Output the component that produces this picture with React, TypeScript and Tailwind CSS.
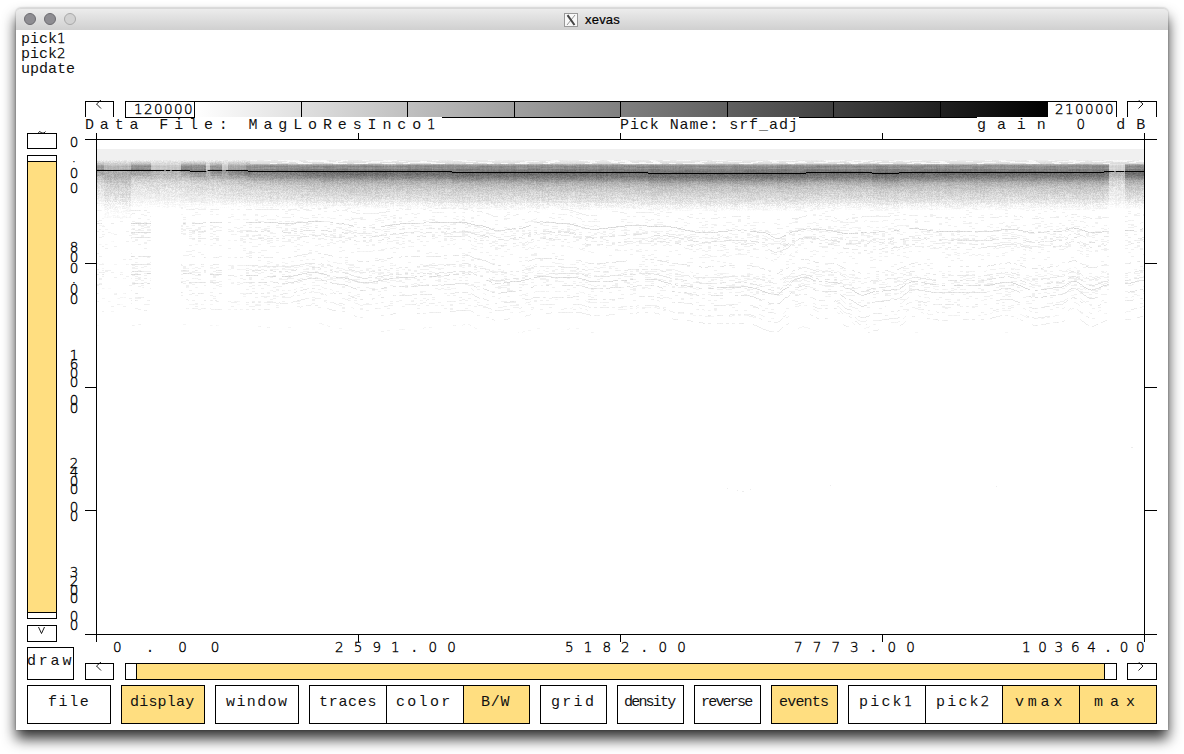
import React from "react";

const LETTER_ADVANCE = 9;
const DIGIT_ADVANCE = 8.59;

const letterFont = 'font-["Liberation_Mono",monospace] text-[15px]';
const digitFont = 'font-["DejaVu_Sans",sans-serif] font-extralight text-[13.5px] text-black [-webkit-text-stroke:0.35px_black]';

/* Fixed pitch label: every character takes `pitch` pixels. */
function Label({ text, pitch, className = "" }: { text: string; pitch: number; className?: string }) {
  const runs = text.match(/\d+|[^\d]+/g) ?? [];
  return (
    <div className={`${letterFont} whitespace-pre text-[#111] ${className}`}>
      {runs.map((run, i) =>
        /\d/.test(run) ? (
          <span key={i} className={`${digitFont} leading-[0]`} style={{ letterSpacing: pitch - DIGIT_ADVANCE }}>
            {run}
          </span>
        ) : (
          <span key={i} style={{ letterSpacing: pitch - LETTER_ADVANCE }}>
            {run}
          </span>
        )
      )}
    </div>
  );
}

type Pt = [number, number];

const upper: Pt[] = [
  [97, 222], [250, 222.5], [290, 223], [320, 221], [340, 223], [363, 226.7], [410, 221.7], [430, 221], [463, 220.7],
  [480, 224], [497, 229], [520, 227], [540, 221], [563, 222.7], [593, 229], [630, 225.7], [663, 226], [703, 232],
  [740, 229], [763, 230.7], [777, 236.7], [785, 234], [792, 230], [807, 227], [823, 228], [847, 231.7], [877, 230.7],
  [913, 228], [940, 231], [990, 231], [1010, 229], [1033, 232], [1060, 230.5], [1073, 227], [1093, 231.5],
  [1107, 230], [1125, 229], [1145, 227],
];
const lower: Pt[] = [
  [97, 275], [182, 274], [250, 275], [285, 275.5], [313, 271], [340, 276], [363, 281.6], [400, 277], [430, 276],
  [467, 274], [480, 279], [497, 284], [515, 282], [540, 277], [575, 277.5], [593, 281], [650, 278], [680, 284],
  [703, 287], [745, 286], [777, 294], [786, 288], [795, 279], [803, 277], [820, 282], [835, 282.5], [847, 289],
  [862, 295.5], [875, 292], [895, 290], [913, 281.5], [940, 285], [980, 285], [1007, 281], [1035, 289], [1060, 286],
  [1073, 280], [1091, 289], [1108, 284], [1125, 283], [1145, 280],
];

function sample(points: Pt[], x: number) {
  for (let i = 1; i < points.length; i++) {
    if (x <= points[i][0]) {
      const [x0, y0] = points[i - 1];
      const [x1, y1] = points[i];
      const t = (x - x0) / (x1 - x0);
      return y0 + (y1 - y0) * t * t * (3 - 2 * t);
    }
  }
  return points[points.length - 1][1];
}

function hash(a: number, b: number) {
  let h = (Math.imul(a, 374761393) + Math.imul(b, 668265263)) | 0;
  h = Math.imul(h ^ (h >>> 13), 1274126177);
  return ((h ^ (h >>> 16)) >>> 0) / 4294967296;
}

/* Coverage of each trace: [from, to, surface strength, reflector strength] */
const zones = [
  [97, 103, 0.95, 0.7], [104, 130, 0.62, 0.25], [131, 150, 1.05, 1.1], [151, 180, 0.45, 0], [181, 205, 1.05, 0.9],
  [206, 209, 0.4, 0], [210, 221, 0.95, 0.9], [222, 227, 0.4, 0], [228, 245, 0.8, 0.6], [246, 1108, 1, 1],
  [1109, 1124, 0.3, 0], [1125, 1143, 1, 1],
];

/* Reflectors: [depth on the left edge, darkness, chance of ink] */
const events = [
  [209, 20, 0.5], [214, 16, 0.3], [218, 14, 0.25], [222.5, 38, 0.85], [226, 14, 0.3], [229, 22, 0.4], [231.5, 30, 0.6],
  [234, 20, 0.4], [237, 26, 0.5], [240, 16, 0.3], [245, 14, 0.25], [256, 26, 0.55], [262, 13, 0.25], [265, 24, 0.6],
  [268, 14, 0.25], [271, 28, 0.6], [275, 36, 0.8], [278, 16, 0.25], [283, 30, 0.65], [289, 14, 0.3], [293, 24, 0.5],
  [297, 16, 0.35], [301.5, 20, 0.45], [304, 14, 0.3], [310, 20, 0.5], [326, 12, 0.25],
];

const surface = (x: number) =>
  x < 190 ? 170 : x < 207 ? 171 : x < 248 ? 170 : x < 452 ? 171 : x < 648 ? 172 : x < 806 ? 173 : x < 872 ? 172 : x < 899 ? 173 : x < 1104 ? 172 : 171;

const ramp = (stops: Pt[], v: number) => {
  if (v <= stops[0][0]) return stops[0][1];
  for (let i = 1; i < stops.length; i++)
    if (v <= stops[i][0])
      return stops[i - 1][1] + ((stops[i][1] - stops[i - 1][1]) * (v - stops[i - 1][0])) / (stops[i][0] - stops[i - 1][0]);
  return stops[stops.length - 1][1];
};

const coda: Pt[] = [[1, 148], [4, 135], [7, 112], [10, 82], [14, 62], [20, 44], [26, 33], [31, 20], [35, 8], [39, 0]];

function buildSection() {
  const ink: Float32Array[] = [];
  const top = 149;
  const rows = 184;
  for (let r = 0; r < rows; r++) ink.push(new Float32Array(1047));
  for (let x = 97; x <= 1143; x++) {
    const zone = zones.find((z) => x >= z[0] && x <= z[1]) ?? zones[9];
    const s = surface(x);
    const col = hash(x, 7) - 0.5;
    const left = ramp([[97, 0.55], [180, 0.55], [250, 0.8], [330, 1]], x);
    for (let y = top; y < 218; y++) {
      const n = hash(x, y) - 0.5;
      let v = 0;
      if (y < 160) v = 16 + col * 2;
      else if (y < 164) {
        v = 20 + (y - 160) * 5 + n * 6;
        const dash = hash(Math.floor((x + y * 5) / 7), y);
        if (dash > 0.62) v = 8 + n * 6;
        if (x < 250) v = 18 + (y - 160) * 14 * zone[2] + n * 20;
      } else if (y < s) {
        const band = ramp([[164, 78], [165, 105], [166, 118], [168, 112], [169, 128], [170, 130], [172, 138]], y);
        v = (band + n * 12 + (hash(Math.floor(x / 12), y) - 0.5) * 14) * (zone[2] * 0.9 + 0.1) * (0.85 + left * 0.15) + col * 10;
      } else if (y === s) {
        const broken = zone[2] < 0.5 && hash(x >> 1, 3) > 0.8;
        v = broken ? 130 : 255;
      } else {
        const d = y - s;
        const streak = (hash(Math.floor((x + y * 13) / 9), y) - 0.5) * 10;
        const base = ramp(coda, d);
        const near = x < 250 && d < 6 ? 0.75 + zone[2] * 0.4 : 1;
        v = base * left * near * (x > 1000 && zone[2] < 0.5 ? 0.5 : 1);
        if (x >= 104 && x < 131) v += ramp([[1, 0], [8, 18], [18, 14], [46, 4]], d);
        if (v > 2) v += n * Math.min(26, v * 0.9) + streak + col * 6;
        if (d > 30 && n < 0) v *= 0.4;
      }
      ink[y - top][x - 97] = v;
    }
    const a = sample(upper, x) - 222;
    const b = sample(lower, x) - 275;
    events.forEach(([depth, dark, chance], k) => {
      const t = Math.max(-0.2, Math.min(1.3, (depth - 222) / 53));
      const y = Math.round(depth + a + (b - a) * t + Math.sin(x / 57 + k * 2.1) * 0.9);
      const patch = hash(Math.floor((x + k * 17) / 31), k + 90);
      const dash = hash(Math.floor(x / 3), k + 200);
      const p = (chance * (0.55 + patch * 0.85)) * Math.min(1, zone[3]);
      if (dash < p && zone[3] > 0 && y - top < rows) {
        const w = dark * (0.65 + hash(x, k) * 0.5) * Math.max(0.5, zone[3]);
        ink[y - top][x - 97] = Math.max(ink[y - top][x - 97], w);
      }
    });
    if (zone[3] > 0) {
      for (let y = 207; y < 310; y++) {
        const dy = y - a;
        const dense = (dy > 220 && dy < 241) || (dy > 264 && dy < 286);
        if (hash(Math.floor(x / 3), y * 3 + 11) < (dense ? 0.17 : 0.05) * Math.min(1, zone[3] * 1.2)) {
          ink[y - top][x - 97] = Math.max(ink[y - top][x - 97], 13);
        }
      }
    }
  }
  const paths = new Map<number, string[]>();
  ink.forEach((row, r) => {
    let start = 0;
    const level = (i: number) => Math.max(0, Math.min(255, Math.round(row[i] / 5) * 5));
    for (let i = 1; i <= row.length; i++) {
      if (i === row.length || level(i) !== level(start)) {
        const l = level(start);
        if (l > 0) {
          if (!paths.has(l)) paths.set(l, []);
          paths.get(l)!.push(`M${start + 12} ${r + top - 131.5}h${i - start}`);
        }
        start = i;
      }
    }
  });
  return [...paths.entries()].map(([l, d]) => ({ color: `rgb(${255 - l},${255 - l},${255 - l})`, d: d.join("") }));
}

const section = buildSection();

function Plot() {
  return (
    <svg width="1072" height="510" viewBox="0 0 1072 510" shapeRendering="crispEdges" className="block" fill="none">
      {section.map((p) => (
        <path key={p.color} d={p.d} stroke={p.color} />
      ))}
      <path d="M642 356.5h1M652 358.5h1M657 359.5h2M665 357.5h1M745 353.5h1M911 354.5h1M1046 315.5h2" stroke="#ececec" />
      <path
        stroke="#000"
        d="M0 7.5H1072M0 502.5H1072M11.5 1V510M1059.5 1V510M273.5 1V7M535.5 1V7M797.5 1V7M273.5 503V510M535.5 503V510M797.5 503V510M0 131.5H11M0 255.5H11M0 378.5H11M1060 131.5H1072M1060 255.5H1072M1060 378.5H1072"
      />
    </svg>
  );
}

function Arrow({ dir }: { dir: "left" | "right" | "down" | "wave" }) {
  const d = {
    left: "M5 0L.5 4L5 8.5",
    right: "M.5 0L5 4L.5 8.5",
    down: "M.5 0L3.5 6.5L6.5 0",
    wave: "M0 2.5L1.5 .5L4 2L6 2L7.5 .5",
  }[dir];
  return (
    <svg width="8" height="10" viewBox="0 0 8 10" fill="none" stroke="#000" strokeWidth="0.9" className={dir === "left" || dir === "right" ? "-mt-[2px]" : ""}>
      <path d={d} />
    </svg>
  );
}

type Cell = { t: string; pitch: number; pad: string; w: string; on?: boolean };
const groups: Cell[][] = [
  [{ t: "file", pitch: 10.6, pad: "pl-[20px]", w: "w-[84px]" }],
  [{ t: "display", pitch: 9.2, pad: "pl-[8px]", w: "w-[84px]", on: true }],
  [{ t: "window", pitch: 10.4, pad: "pl-[10px]", w: "w-[84px]" }],
  [
    { t: "traces", pitch: 9.7, pad: "pl-[9px]", w: "w-[78px]" },
    { t: "color", pitch: 11.3, pad: "pl-[9px]", w: "w-[78px]" },
    { t: "B/W", pitch: 9.7, pad: "pl-[17px]", w: "w-[67px]", on: true },
  ],
  [{ t: "grid", pitch: 11.3, pad: "pl-[10px]", w: "w-[67px]" }],
  [{ t: "density", pitch: 7.2, pad: "pl-[6px]", w: "w-[67px]" }],
  [{ t: "reverse", pitch: 7.2, pad: "pl-[6px]", w: "w-[67px]" }],
  [{ t: "events", pitch: 8.2, pad: "pl-[7px]", w: "w-[67px]", on: true }],
  [
    { t: "pick1", pitch: 11.2, pad: "pl-[10px]", w: "w-[78px]" },
    { t: "pick2", pitch: 11.2, pad: "pl-[10px]", w: "w-[78px]" },
    { t: "vmax", pitch: 12.8, pad: "pl-[12px]", w: "w-[78px]", on: true },
    { t: "max", pitch: 16, pad: "pl-[14px]", w: "w-[78px]", on: true },
  ],
];

/* One character per line, read from top to bottom. */
function DepthLabel({ text, className }: { text: string; className: string }) {
  return <div className={`${digitFont} h-[63px] w-[10px] whitespace-pre text-center ${className}`}>{text.split("").join("\n")}</div>;
}

export default function App() {
  return (
    <div className="h-[754px] w-[1184px] overflow-hidden bg-white pl-4 pt-2">
      <div className="flex h-[722px] w-[1152px] flex-col rounded-t-[5px] bg-white shadow-[0_0_2px_rgba(0,0,0,0.35),0_9px_14px_rgba(0,0,0,0.8)]">
        <div className="flex h-[22px] shrink-0 items-center rounded-t-[5px] border-t border-[#d8d8d8] bg-linear-to-b from-[#ececec] to-[#d0d0d0] pl-2">
          <div className="-mt-px flex gap-2">
            <div className="size-3 rounded-full border border-[#6c6b70] bg-[#8e8d92]" />
            <div className="size-3 rounded-full border border-[#6c6b70] bg-[#8e8d92]" />
            <div className="size-3 rounded-full border border-[#a9a9a9] bg-[#d2d2d2]" />
          </div>
          <svg width="14" height="14" viewBox="0 0 14 14" className="ml-[488px]">
            <rect x="0.5" y="0.5" width="13" height="13" fill="#f8f8f8" stroke="#999" />
            <path d="M11 2L3 12" stroke="#888" strokeWidth="0.9" />
            <path d="M3.5 2.2L10.5 12" stroke="#444" strokeWidth="2" />
          </svg>
          <div className='ml-[7px] font-["Liberation_Sans",sans-serif] text-[13px] leading-none tracking-[0.2px] text-black [-webkit-text-stroke:0.2px_black]'>xevas</div>
        </div>

        <div className="h-[71px] shrink-0 pl-[5px] pt-[2px]">
          {["pick1", "pick2", "update"].map((t) => (
            <Label key={t} text={t} pitch={9} className="h-[15px] leading-[15px]" />
          ))}
        </div>

        <div className="flex h-[584px] shrink-0">
          <div className="flex w-[58px] shrink-0 flex-col pl-[11px]">
            <div className="flex h-8 w-[30px] items-end justify-center overflow-hidden">
              <div className="h-[2px] overflow-hidden">
                <Arrow dir="wave" />
              </div>
            </div>
            <div className="h-4 w-[30px] border border-black" />
            <div className="mt-[6px] flex h-[464px] w-[30px] flex-col border border-black">
              <div className="h-[5px]" />
              <div className="flex-1 border-y border-black bg-[#ffde80]" />
              <div className="h-[5px]" />
            </div>
            <div className="mt-[6px] flex h-[17px] w-[30px] justify-center border border-black pt-px">
              <Arrow dir="down" />
            </div>
            <div className="mt-[5px] h-[33px] w-[47px] shrink-0 border border-black">
              <Label text="draw" pitch={11.8} className="-ml-px leading-[28px]" />
            </div>
          </div>

          <div className="-ml-[5px] mr-[5px] flex w-[11px] shrink-0 flex-col">
            <DepthLabel text="0.00" className="mt-[34px] leading-[15.3px]" />
            <DepthLabel text="800.00" className="mt-[44px] leading-[10.4px]" />
            <DepthLabel text="1600.00" className="mt-[46px] leading-[8.9px]" />
            <DepthLabel text="2400.00" className="mt-[45px] leading-[8.8px]" />
            <DepthLabel text="3200.00" className="mt-[46px] leading-[8.8px]" />
          </div>

          <div className="w-[1072px] shrink-0">
            <div className="flex h-4">
              <div className="flex w-[29px] justify-center border border-b-0 border-black">
                <Arrow dir="left" />
              </div>
              <div className="ml-[11px] flex w-[992px] border border-b-0 border-black">
                <div className="w-[69px] border-r border-black">
                  <Label text="120000" pitch={10} className="pl-[8px] leading-[17px]" />
                </div>
                <div className="flex flex-1 bg-linear-to-r/srgb from-white to-black">
                  {[0, 1, 2, 3, 4, 5, 6].map((i) => (
                    <div key={i} className="w-[106.5px] border-r border-black" />
                  ))}
                </div>
                <div className="w-[68px]">
                  <Label text="210000" pitch={10} className="pl-[7px] leading-[17px]" />
                </div>
              </div>
              <div className="ml-[10px] flex w-[30px] justify-center border border-b-0 border-black">
                <Arrow dir="right" />
              </div>
            </div>
            <div className="flex h-px">
              <div className="ml-[40px] w-[70px] bg-black" />
              <div className="ml-[247px] w-[178px] bg-black" />
              <div className="ml-[179px] w-[178px] bg-black" />
            </div>
            <div className="flex h-[14px] leading-[16px]">
              <Label text="Data File: MagLoResInco1" pitch={14.87} className="w-[535px]" />
              <Label text="Pick Name: srf_adj" pitch={9.93} className="w-[357px]" />
              <Label text="gain 0 dB" pitch={19.9} />
            </div>
            <Plot />
            <div className="flex h-[21px] leading-[14px]">
              <Label text="0.00" pitch={32.6} className="ml-[28px] w-[222px]" />
              <Label text="2591.00" pitch={18.7} className="w-[230px]" />
              <Label text="5182.00" pitch={18.7} className="w-[229px]" />
              <Label text="7773.00" pitch={18.7} className="w-[228px]" />
              <Label text="10364.00" pitch={16.3} />
            </div>
            <div className="flex h-[17px]">
              <div className="flex w-[29px] justify-center border border-black">
                <Arrow dir="left" />
              </div>
              <div className="ml-[11px] flex w-[992px] border border-black pl-[10px] pr-[11px]">
                <div className="flex-1 border-x border-black bg-[#ffde80]" />
              </div>
              <div className="ml-[10px] flex w-[30px] justify-center border border-black">
                <Arrow dir="right" />
              </div>
            </div>
          </div>
        </div>

        <div className="flex gap-[10px] pl-[11px]">
          {groups.map((cells, g) => (
            <div key={g} className="flex">
              {cells.map((c, i) => (
                <div
                  key={c.t}
                  className={`h-[39px] border border-black ${c.w} ${c.pad} ${i ? "-ml-px" : ""} ${c.on ? "bg-[#ffde80]" : "bg-white"}`}
                >
                  <Label text={c.t} pitch={c.pitch} className="leading-[34px]" />
                </div>
              ))}
            </div>
          ))}
        </div>
      </div>
    </div>
  );
}
